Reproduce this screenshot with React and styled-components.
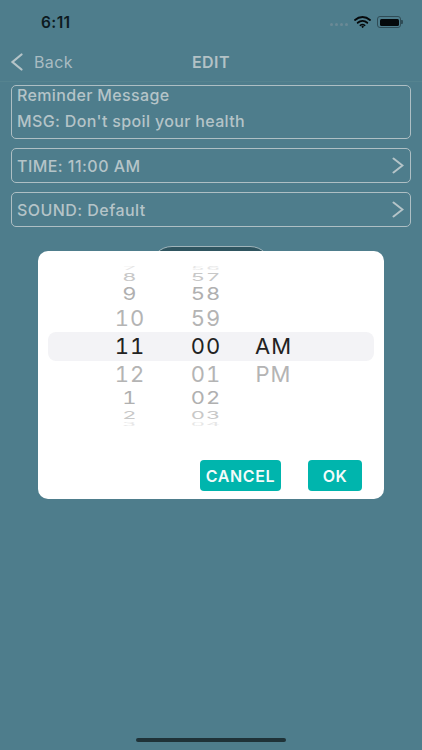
import React from "react";
import styled, { createGlobalStyle } from "styled-components";

const GlobalStyle = createGlobalStyle`
  html, body {
    margin: 0;
    padding: 0;
    background: #4e7d8c;
  }
  * {
    box-sizing: border-box;
  }
`;

const Page = styled.div`
  position: relative;
  width: 422px;
  height: 750px;
  overflow: hidden;
  background: #4e7d8c;
  font-family: Inter, "Liberation Sans", sans-serif;
`;

const StatusBar = styled.div`
  height: 44px;
  display: flex;
  align-items: center;
  justify-content: space-between;
  padding: 0 21px 0 41px;
`;

const Clock = styled.span`
  font-size: 15.5px;
  font-weight: 600;
  letter-spacing: 0.4px;
  color: #0d1a1f;
`;

const StatusIcons = styled.div`
  display: flex;
  align-items: center;
  gap: 6px;
`;

const SignalDots = styled.div`
  display: flex;
  gap: 2px;
  margin-top: 4px;
  span {
    width: 3px;
    height: 3px;
    border-radius: 50%;
    background: #6b8a96;
  }
`;

const Battery = styled.div`
  position: relative;
  width: 24px;
  height: 12px;
  border: 1px solid #2f4c56;
  border-radius: 3px;
  padding: 1.5px;
  div {
    width: 100%;
    height: 100%;
    background: #05090b;
    border-radius: 1.5px;
  }
  &::after {
    content: "";
    position: absolute;
    right: -3px;
    top: 3px;
    width: 2px;
    height: 4px;
    background: #2f4c56;
    border-radius: 0 1px 1px 0;
  }
`;

const NavBar = styled.div`
  position: relative;
  height: 38px;
  display: flex;
  align-items: center;
  justify-content: center;
  padding-bottom: 2px;
  border-bottom: 1px solid #55838f;
`;

const BackLink = styled.div`
  position: absolute;
  left: 10px;
  top: 8px;
  display: flex;
  align-items: center;
  gap: 11px;
  font-size: 16px;
  letter-spacing: 0.4px;
  color: #a9bcc2;
`;

const NavTitle = styled.div`
  font-size: 16px;
  font-weight: 600;
  letter-spacing: 0.5px;
  color: #b3c2c6;
`;

const Form = styled.div`
  display: flex;
  flex-direction: column;
  padding: 3px 11px 0;
  gap: 9px;
`;

const MessageBox = styled.div`
  height: 54px;
  padding: 0 5px;
  border: 1px solid #aebfc4;
  border-radius: 5px;
  display: flex;
  flex-direction: column;
  gap: 8px;
  font-size: 16px;
  font-weight: 500;
  letter-spacing: 0.35px;
  line-height: 18px;
  color: #b5c4c8;
`;

const SelectRow = styled.div`
  height: 35px;
  padding: 0 6px 0 5px;
  border: 1px solid #aebfc4;
  border-radius: 5px;
  display: flex;
  align-items: center;
  justify-content: space-between;
  font-size: 16px;
  font-weight: 500;
  letter-spacing: 0.45px;
  color: #b5c4c8;
`;

const SaveButton = styled.div`
  width: 122px;
  height: 44px;
  margin: 10px auto 0;
  background: #2f5560;
  border: 1px solid #9fb4ba;
  border-radius: 22px;
`;

const Overlay = styled.div`
  position: absolute;
  left: 38px;
  top: 251px;
  width: 346px;
  height: 248px;
  background: #fff;
  border-radius: 10px;
  padding: 15px 10px 0;
`;

const Wheel = styled.div`
  position: relative;
  height: 160px;
  overflow: hidden;
  display: flex;
  padding-left: 61px;
`;

const Band = styled.div`
  position: absolute;
  left: 0;
  right: 0;
  top: 66px;
  height: 29px;
  background: #f3f3f6;
  border-radius: 8px;
`;

const Column = styled.div`
  position: relative;
  width: ${(p) => p.$width}px;
  display: flex;
  flex-direction: column;
`;

const Item = styled.div`
  height: ${(p) => p.$height}px;
  display: flex;
  align-items: center;
  justify-content: center;
  font-size: 22px;
  letter-spacing: 1px;
  font-variant-numeric: tabular-nums;
  color: ${(p) => p.$color};
  transform: scaleY(${(p) => p.$squash});
  overflow: visible;
`;

const Actions = styled.div`
  display: flex;
  justify-content: flex-end;
  gap: 27px;
  margin-top: 34px;
  padding-right: 12px;
`;

const ActionButton = styled.div`
  width: ${(p) => p.$width}px;
  height: 31px;
  border-radius: 4px;
  background: #00b5ad;
  color: #f2fbfa;
  display: flex;
  align-items: center;
  justify-content: center;
  font-size: 16px;
  font-weight: 600;
  letter-spacing: 0.6px;
`;

const HomeIndicator = styled.div`
  position: absolute;
  left: 136px;
  bottom: 8px;
  width: 150px;
  height: 4px;
  border-radius: 2px;
  background: #1f3238;
`;

// height, vertical squash and colour per wheel position, top to bottom
const slots = [
  { height: 4, squash: 0.2, color: "#e6e6e6" },
  { height: 14, squash: 0.5, color: "#c8c8c8" },
  { height: 20, squash: 0.78, color: "#b0b0b0" },
  { height: 28, squash: 0.95, color: "#b4b4b4" },
  { height: 28, squash: 1, color: "#222" },
  { height: 28, squash: 0.95, color: "#b4b4b4" },
  { height: 20, squash: 0.78, color: "#b0b0b0" },
  { height: 14, squash: 0.5, color: "#c8c8c8" },
  { height: 4, squash: 0.2, color: "#e6e6e6" },
];

const hours = ["7", "8", "9", "10", "11", "12", "1", "2", "3"];
const minutes = ["56", "57", "58", "59", "00", "01", "02", "03", "04"];
const periods = ["", "", "", "", "AM", "PM", "", "", ""];

const Chevron = () => (
  <svg width="12" height="17" viewBox="0 0 12 17" fill="none">
    <path d="M1.5 1.5 L10.5 8.5 L1.5 15.5" stroke="#b5c4c8" strokeWidth="2" strokeLinecap="round" />
  </svg>
);

const WheelColumn = ({ values, width }) => (
  <Column $width={width}>
    {values.map((v, i) => (
      <Item key={i} $height={slots[i].height} $squash={slots[i].squash} $color={slots[i].color}>
        {v}
      </Item>
    ))}
  </Column>
);

const App = () => {
  return (
    <Page>
      <GlobalStyle />
      <StatusBar>
        <Clock>6:11</Clock>
        <StatusIcons>
          <SignalDots>
            <span />
            <span />
            <span />
            <span />
          </SignalDots>
          <svg width="17" height="12" viewBox="0 0 17 12" fill="none" stroke="#05090b" strokeLinecap="round">
            <path d="M1 4 C5.5 0 11.5 0 16 4" strokeWidth="1.8" />
            <path d="M3.7 6.8 C6.5 4.4 10.5 4.4 13.3 6.8" strokeWidth="1.8" />
            <path d="M6.3 9.3 C7.6 8.3 9.4 8.3 10.7 9.3" strokeWidth="1.6" />
            <circle cx="8.5" cy="10.8" r="0.6" fill="#05090b" />
          </svg>
          <Battery>
            <div />
          </Battery>
        </StatusIcons>
      </StatusBar>
      <NavBar>
        <BackLink>
          <svg width="13" height="18" viewBox="0 0 13 18" fill="none">
            <path d="M11.5 1.5 L2.5 9 L11.5 16.5" stroke="#b5c4c8" strokeWidth="2.2" strokeLinecap="round" />
          </svg>
          Back
        </BackLink>
        <NavTitle>EDIT</NavTitle>
      </NavBar>
      <Form>
        <MessageBox>
          <span>Reminder Message</span>
          <span>MSG: Don't spoil your health</span>
        </MessageBox>
        <SelectRow>
          TIME: 11:00 AM
          <Chevron />
        </SelectRow>
        <SelectRow>
          SOUND: Default
          <Chevron />
        </SelectRow>
        <SaveButton />
      </Form>
      <Overlay>
        <Wheel>
          <Band />
          <WheelColumn values={hours} width={42} />
          <WheelColumn values={minutes} width={110} />
          <WheelColumn values={periods} width={25} />
        </Wheel>
        <Actions>
          <ActionButton $width={81}>CANCEL</ActionButton>
          <ActionButton $width={54}>OK</ActionButton>
        </Actions>
      </Overlay>
      <HomeIndicator />
    </Page>
  );
};

export default App;
